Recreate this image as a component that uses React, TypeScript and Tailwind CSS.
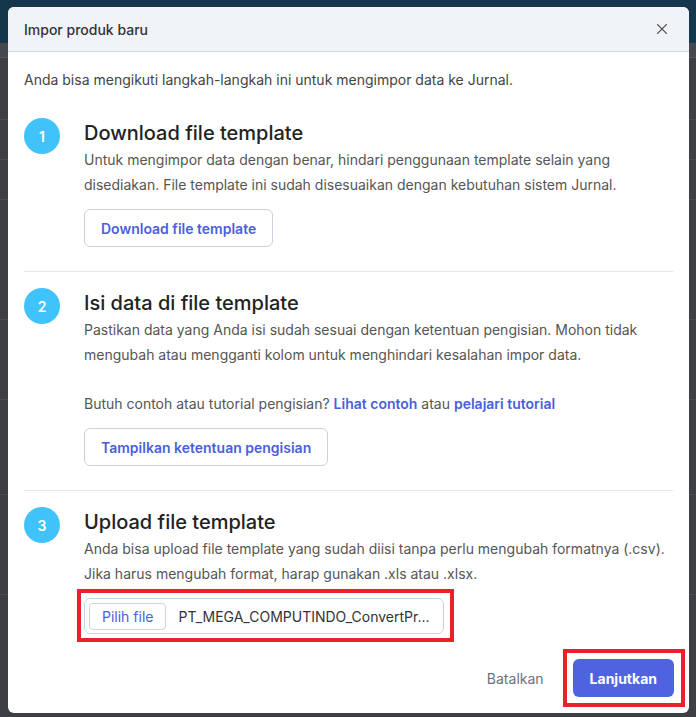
import { X } from "lucide-react";
import type { ReactNode } from "react";

type StepProps = {
  num: number;
  title: string;
  children: ReactNode;
};

function Step({ num, title, children }: StepProps) {
  return (
    <div className="flex gap-6">
      <div className="flex h-9 w-9 shrink-0 items-center justify-center rounded-full bg-[#40c3fb] text-[14px] font-semibold text-white">
        {num}
      </div>
      <div className="min-w-0 flex-1">
        <h3 className="text-[20px] leading-[30px] font-medium text-[#222]">{title}</h3>
        {children}
      </div>
    </div>
  );
}

function OutlineButton({ label }: { label: string }) {
  return (
    <button className="mt-3 h-[38px] rounded-md border border-[#cbd2de] bg-white px-4 text-[14px] font-semibold text-[#4a5fdc]">
      {label}
    </button>
  );
}

export default function App() {
  return (
    <div className="relative h-[717px] w-[696px] overflow-hidden bg-[#3d3f44] font-['Inter',sans-serif]">
      {/* dimmed page behind the modal */}
      <div className="h-[43px] bg-[#15374b]" />
      <div className="h-[15px] border-b border-[#55585d] bg-[#45484d]" />
      <div className="h-[62px] border-b border-[#4a4d52]" />
      <div className="h-[40px] border-b border-[#4a4d52]" />
      <div className="h-[40px] border-b border-[#4a4d52]" />
      <div className="h-[120px] border-b border-[#4a4d52]" />
      <div className="h-[80px] border-b border-[#4a4d52]" />
      <div className="h-[95px] border-b border-[#4a4d52]" />
      <div className="h-[100px] border-b border-[#4a4d52]" />

      <div className="absolute left-[8px] top-[7px] w-[681px] rounded-md bg-white">
        <div className="flex h-[45px] items-center justify-between rounded-t-md border-b border-[#cdd4de] bg-[#f0f3f8] px-4">
          <span className="text-[14px] font-medium text-[#333]">Impor produk baru</span>
          <X className="mr-[2px] h-[18px] w-[18px] text-[#555]" strokeWidth={1.5} />
        </div>

        <div className="px-4 pt-[18px] pb-4">
          <p className="text-[14px] leading-5 text-[#444]">
            Anda bisa mengikuti langkah-langkah ini untuk mengimpor data ke Jurnal.
          </p>

          <div className="mt-[28px]">
            <Step num={1} title="Download file template">
              <p className="text-[14px] leading-[24.5px] text-[#555]">
                Untuk mengimpor data dengan benar, hindari penggunaan template selain yang
                <br />
                disediakan. File template ini sudah disesuaikan dengan kebutuhan sistem Jurnal.
              </p>
              <OutlineButton label="Download file template" />
            </Step>
          </div>

          <div className="mt-6 mb-4 border-t border-[#e3e6eb]" />

          <Step num={2} title="Isi data di file template">
            <p className="text-[14px] leading-[24.5px] text-[#555]">
              Pastikan data yang Anda isi sudah sesuai dengan ketentuan pengisian. Mohon tidak
              <br />
              mengubah atau mengganti kolom untuk menghindari kesalahan impor data.
              <br />
              <br />
              Butuh contoh atau tutorial pengisian?{" "}
              <span className="font-semibold text-[#4a5fdc]">Lihat contoh</span> atau{" "}
              <span className="font-semibold text-[#4a5fdc]">pelajari tutorial</span>
            </p>
            <OutlineButton label="Tampilkan ketentuan pengisian" />
          </Step>

          <div className="mt-6 mb-4 border-t border-[#e3e6eb]" />

          <Step num={3} title="Upload file template">
            <p className="text-[14px] leading-[24.5px] text-[#555]">
              Anda bisa upload file template yang sudah diisi tanpa perlu mengubah formatnya (.csv).
              <br />
              Jika harus mengubah format, harap gunakan .xls atau .xlsx.
            </p>
            <div className="relative mt-3 flex h-[36px] w-[360px] items-center rounded-md border border-[#cdd3dd] pl-[4px]">
              <span className="flex h-[27px] items-center rounded border border-[#cdd3df] px-3 text-[14px] text-[#4a5fdc]">
                Pilih file
              </span>
              <span className="ml-3 truncate text-[14px] text-[#333]">
                PT_MEGA_COMPUTINDO_ConvertPr...
              </span>
              <div className="pointer-events-none absolute -top-[10px] -right-[11px] -bottom-[9px] -left-[8px] border-4 border-[#e8212b]" />
            </div>
          </Step>

          <div className="mt-[25px] flex items-center justify-end">
            <button className="mr-[29px] text-[14px] text-[#6b7280]">Batalkan</button>
            <div className="relative mr-[-1px]">
              <button className="h-[38px] rounded-md bg-[#4f63e0] px-[17px] text-[14px] font-bold text-white">
                Lanjutkan
              </button>
              <div className="pointer-events-none absolute -top-[10px] -right-[11px] -bottom-[10px] -left-[10px] border-4 border-[#e8212b]" />
            </div>
          </div>
        </div>
      </div>
    </div>
  );
}
